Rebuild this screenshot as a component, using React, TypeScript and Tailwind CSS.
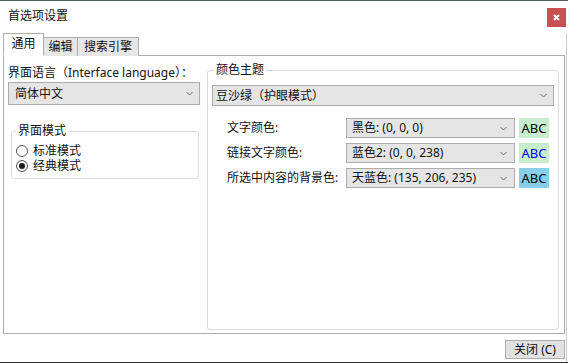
import React, { useState } from "react";

const font = "font-['Noto_Sans','Noto_Sans_CJK_SC',sans-serif]";

function Chevron() {
  return (
    <svg width="7" height="5" viewBox="0 0 7 5" className="shrink-0">
      <polyline points="0.5,1 3.5,4 6.5,1" fill="none" stroke="#6b6b6b" strokeWidth="1" />
    </svg>
  );
}

function Select({ value, className }: { value: string; className: string }) {
  return (
    <div
      className={`flex items-center justify-between border border-[#acacac] bg-[#e5e5e5] text-[12px] leading-[16px] text-[#111] ${className}`}
    >
      <span>{value}</span>
      <Chevron />
    </div>
  );
}

function Radio({ label, checked, onSelect }: { label: string; checked: boolean; onSelect: () => void }) {
  return (
    <div className="flex items-center h-[15px] gap-[5px] cursor-default" onClick={onSelect}>
      <div className="w-[12px] h-[12px] rounded-full border border-[#555] bg-white flex items-center justify-center">
        {checked && <div className="w-[6px] h-[6px] rounded-full bg-[#1a1a1a]" />}
      </div>
      <div className="font-['Liberation_Sans','Noto_Sans_CJK_SC',sans-serif] text-[12px] leading-[14px] text-[#111]">
        {label}
      </div>
    </div>
  );
}

const colorRows = [
  { label: "文字颜色:", value: "黑色: (0, 0, 0)", bg: "bg-[#c7edcc]", fg: "text-black" },
  { label: "链接文字颜色:", value: "蓝色2: (0, 0, 238)", bg: "bg-[#c7edcc]", fg: "text-[#0000ee]" },
  { label: "所选中内容的背景色:", value: "天蓝色: (135, 206, 235)", bg: "bg-[#87ceeb]", fg: "text-black" },
];

export default function App() {
  const [tab, setTab] = useState("通用");
  const [mode, setMode] = useState("经典模式");
  const tabs = ["通用", "编辑", "搜索引擎"];

  return (
    <div
      className={`w-[568px] h-[363px] bg-white border-t border-[#56615a] border-b border-b-[#333] flex flex-col ${font}`}
    >
      <div className="h-[32px] flex justify-between items-start">
        <span className="pl-2 pt-[6px] text-[12px] leading-[17px] text-[#111]">首选项设置</span>
        <button className="mt-[7px] mr-[2px] w-[19px] h-[19px] bg-[#c75050] flex items-center justify-center">
          <svg width="7" height="7" viewBox="0 0 7 7">
            <path d="M1 1L6 6M6 1L1 6" stroke="white" strokeWidth="2" />
          </svg>
        </button>
      </div>

      <div className="flex-1 flex flex-col border-r border-[#c8c8c8] mr-[1px]">
        <div className="h-[23px] pl-[3px] flex items-end relative z-10 -mb-px">
          {tabs.map((t, i) => {
            const active = t === tab;
            return (
              <div
                key={t}
                onClick={() => setTab(t)}
                className={`border border-[#acacac] text-[12px] text-[#111] flex items-center justify-center cursor-default ${
                  i > 0 ? "-ml-px" : ""
                } ${
                  active
                    ? "h-[23px] bg-white border-b-white pb-[2px] relative z-10"
                    : "h-[19px] bg-[#e6e6e6] border-b-0"
                } ${i === 0 ? "w-[41px]" : i === 1 ? "w-[35px]" : "w-[62px]"}`}
              >
                {t}
              </div>
            );
          })}
        </div>

        <div className="h-[279px] ml-[3px] mr-[1px] border border-[#acacac] flex pl-[4px]">
          <div className="w-[192px] pt-[8px] flex flex-col">
            <div className="text-[12px] leading-[17px] text-[#111] whitespace-nowrap">
              界面语言（Interface language）：
            </div>
            <Select value="简体中文" className="mt-[1px] h-[23px] pl-[6px] pr-[6px]" />
            <div className="relative mt-[26px] ml-[3px] mr-[1px] border border-[#dcdcdc] rounded-[3px] pl-[4px] pt-[11px] pb-[5px]">
              <span className="absolute -top-[9px] left-[4px] bg-white px-[2px] text-[12px] leading-[16px] text-[#111]">
                界面模式
              </span>
              {["标准模式", "经典模式"].map((m) => (
                <Radio key={m} label={m} checked={mode === m} onSelect={() => setMode(m)} />
              ))}
            </div>
          </div>

          <div className="relative flex-1 ml-[7px] mr-[5px] mt-[14px] mb-[3px] border border-[#dcdcdc] rounded-[3px] px-[4px] pt-[14px]">
            <span className="absolute -top-[9px] left-[6px] bg-white px-[2px] text-[12px] leading-[16px] text-[#111]">
              颜色主题
            </span>
            <Select value="豆沙绿（护眼模式）" className="h-[21px] pl-[3px] pr-[6px]" />
            <div className="mt-[12px] flex flex-col gap-[5px] pl-[15px]">
              {colorRows.map((r) => (
                <div key={r.label} className="flex items-center h-[20px]">
                  <span className="w-[119px] text-[12px] text-[#111] whitespace-nowrap">{r.label}</span>
                  <Select value={r.value} className="w-[169px] h-[20px] pl-[5px] pr-[7px]" />
                  <div
                    className={`ml-[4px] w-[30px] h-[20px] ${r.bg} ${r.fg} text-[13px] leading-[16px] flex items-center justify-center`}
                  >
                    ABC
                  </div>
                </div>
              ))}
            </div>
          </div>
        </div>

        <div className="flex-1 flex justify-end items-start pt-[6px] pr-[1px]">
          <button className="w-[60px] h-[19px] bg-[#e1e1e1] border border-[#adadad] text-[12px] leading-[16px] text-[#111] flex items-center justify-center">
            关闭 (C)
          </button>
        </div>
      </div>
    </div>
  );
}
